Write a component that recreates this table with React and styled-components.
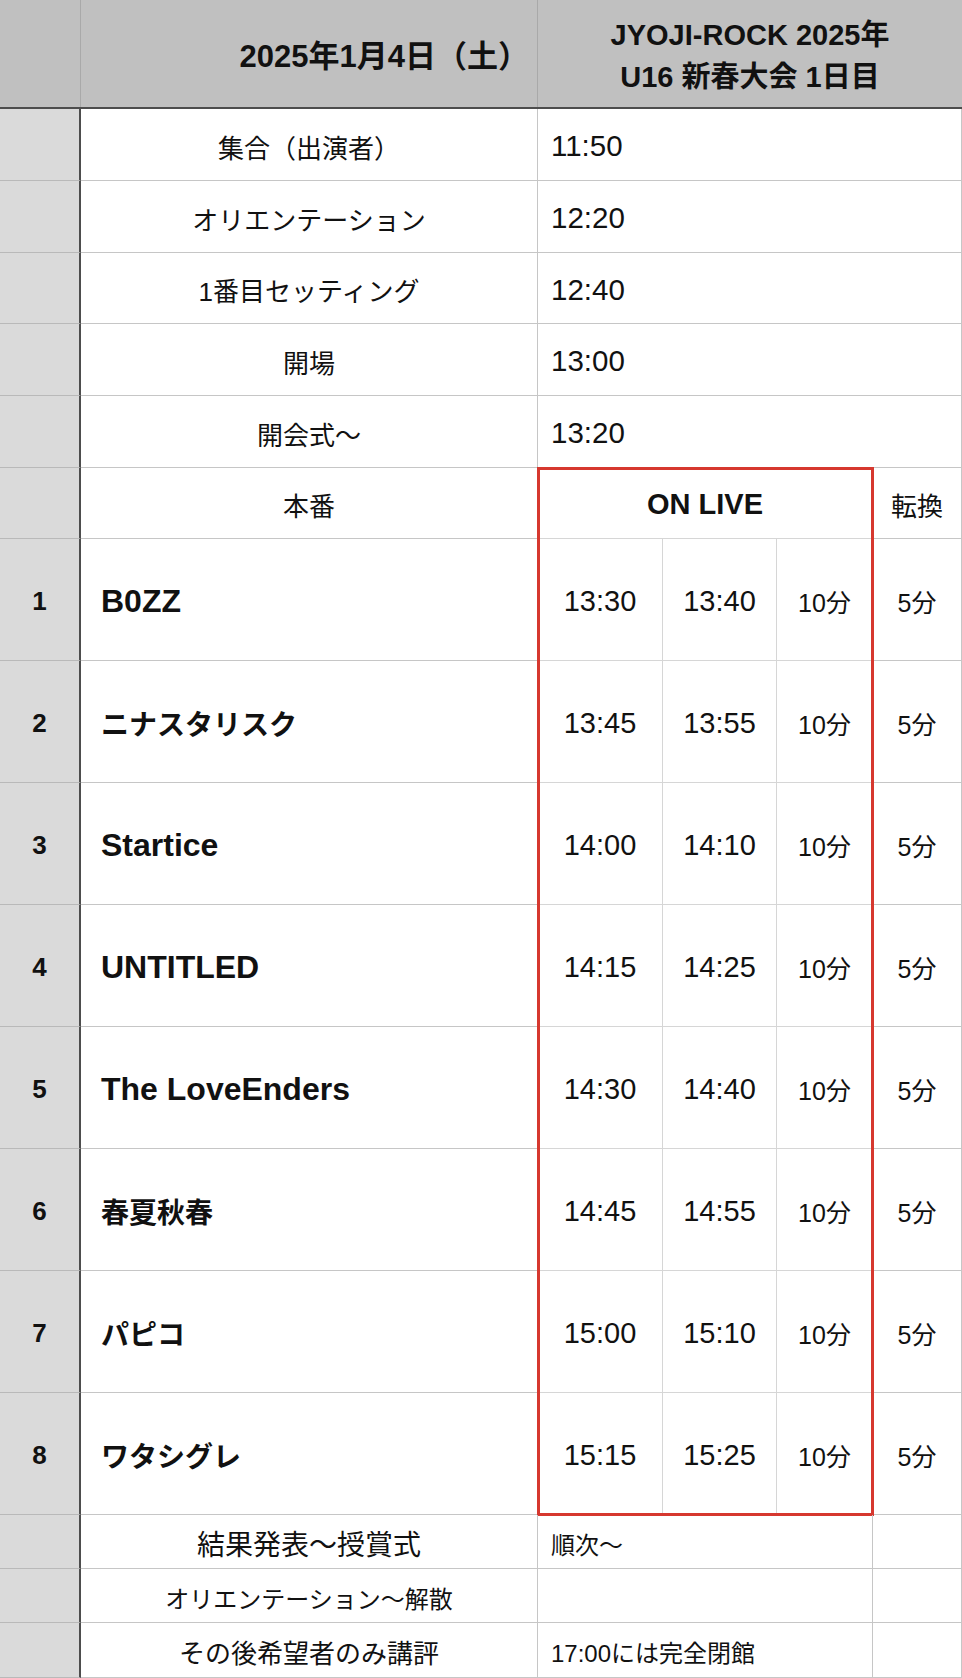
import React from 'react'
import styled, { createGlobalStyle } from 'styled-components'

const FONT = `"Liberation Sans", "Noto Sans CJK JP", sans-serif`
const LINE = '#c6c6c6'
const DARK = '#4d4d4d'
const RED = '#d6382f'

const GlobalStyle = createGlobalStyle`
  html, body { margin: 0; padding: 0; background: #fff; }
  body { font-family: ${FONT}; color: #111; }
  * { box-sizing: border-box; }
`

const Sheet = styled.div`
  width: 962px;
  display: flex;
  flex-direction: column;
`

const Header = styled.div`
  display: grid;
  grid-template-columns: 81px 457px 424px;
  height: 109px;
  background: #c0c0c0;
  border-bottom: 2px solid ${DARK};
`

const HeadCell = styled.div`
  display: flex;
  flex-direction: column;
  align-items: ${p => p.$align || 'center'};
  justify-content: center;
  padding-right: ${p => p.$padRight || 0}px;
  padding-top: ${p => p.$padTop || 0}px;
  border-right: ${p => (p.$last ? 'none' : '1px solid #a9a9a9')};
  font-weight: 700;
  font-size: ${p => p.$size || 28}px;
  line-height: ${p => p.$lh || 'normal'};
  text-align: center;
`

const Section = styled.div`
  display: grid;
  grid-template-columns: ${p => p.$cols};
  grid-template-rows: ${p => p.$rows};
`

const IndexCell = styled.div`
  background: #dadada;
  border-right: 2px solid ${DARK};
  border-bottom: 1px solid #b9b9b9;
  display: flex;
  align-items: center;
  justify-content: center;
  padding-top: 3px;
  font-weight: 700;
  font-size: 26px;
`

const Cell = styled.div`
  display: flex;
  align-items: center;
  justify-content: ${p => (p.$left ? 'flex-start' : 'center')};
  padding-left: ${p => p.$pad || 0}px;
  padding-top: 3px;
  border-right: 1px solid ${LINE};
  border-bottom: 1px solid ${LINE};
  font-size: ${p => p.$size || 26}px;
  font-weight: ${p => (p.$bold ? 700 : 400)};
  white-space: nowrap;
  grid-column: ${p => (p.$span ? `span ${p.$span}` : 'auto')};
`

const LiveBox = styled.div`
  grid-column: 3;
  grid-row: 1 / -1;
  display: grid;
  grid-template-columns: 125px 114px 96px;
  grid-template-rows: 71px repeat(8, 122px);
  outline: 3px solid ${RED};
  outline-offset: -2px;
`

const TimeCell = styled(Cell)`
  border-right-color: #d6d6d6;
  border-bottom-color: ${p => (p.$noBottom ? 'transparent' : '#d6d6d6')};
`

const topRows = [
  ['集合（出演者）', '11:50'],
  ['オリエンテーション', '12:20'],
  ['1番目セッティング', '12:40'],
  ['開場', '13:00'],
  ['開会式〜', '13:20'],
]

// latin names read larger than the kana ones in the sheet font
const bands = [
  ['B0ZZ', 32, '13:30', '13:40'],
  ['ニナスタリスク', 28, '13:45', '13:55'],
  ['Startice', 32, '14:00', '14:10'],
  ['UNTITLED', 32, '14:15', '14:25'],
  ['The LoveEnders', 32, '14:30', '14:40'],
  ['春夏秋春', 28, '14:45', '14:55'],
  ['パピコ', 28, '15:00', '15:10'],
  ['ワタシグレ', 28, '15:15', '15:25'],
]

const bottomRows = [
  ['結果発表〜授賞式', 28, '順次〜'],
  ['オリエンテーション〜解散', 24, ''],
  ['その後希望者のみ講評', 26, '17:00には完全閉館'],
]

function App() {
  return (
    <>
      <GlobalStyle />
      <Sheet>
        <Header>
          <HeadCell />
          <HeadCell $align="flex-end" $padRight={8} $size={31}>
            2025年1月4日（土）
          </HeadCell>
          <HeadCell $last $size={29} $lh="42px" $padTop={4}>
            <span>JYOJI-ROCK 2025年</span>
            <span>U16 新春大会 1日目</span>
          </HeadCell>
        </Header>

        <Section $cols="81px 457px 424px" $rows="72px 72px 71px 72px 72px">
          {topRows.map(([label, time]) => (
            <React.Fragment key={label}>
              <IndexCell />
              <Cell>{label}</Cell>
              <Cell $left $pad={13} $size={29.5}>{time}</Cell>
            </React.Fragment>
          ))}
        </Section>

        <Section $cols="81px 457px 335px 89px" $rows="71px repeat(8, 122px)">
          <IndexCell />
          <Cell>本番</Cell>
          <Cell>転換</Cell>
          {bands.map(([name, size], i) => (
            <React.Fragment key={name}>
              <IndexCell>{i + 1}</IndexCell>
              <Cell $left $pad={20} $size={size} $bold>{name}</Cell>
              <Cell $size={25}>5分</Cell>
            </React.Fragment>
          ))}
          <LiveBox>
            <TimeCell $span={3} $bold $size={29}>ON LIVE</TimeCell>
            {bands.map(([name, , start, end], i) => (
              <React.Fragment key={name}>
                <TimeCell $size={29} $noBottom={i === 7}>{start}</TimeCell>
                <TimeCell $size={29} $noBottom={i === 7}>{end}</TimeCell>
                <TimeCell $size={25} $noBottom={i === 7}>10分</TimeCell>
              </React.Fragment>
            ))}
          </LiveBox>
        </Section>

        <Section $cols="81px 457px 335px 89px" $rows="54px 54px 55px">
          {bottomRows.map(([label, size, note]) => (
            <React.Fragment key={label}>
              <IndexCell />
              <Cell $size={size}>{label}</Cell>
              <Cell $left $pad={13} $size={24}>{note}</Cell>
              <Cell />
            </React.Fragment>
          ))}
        </Section>
      </Sheet>
    </>
  )
}

export default App
